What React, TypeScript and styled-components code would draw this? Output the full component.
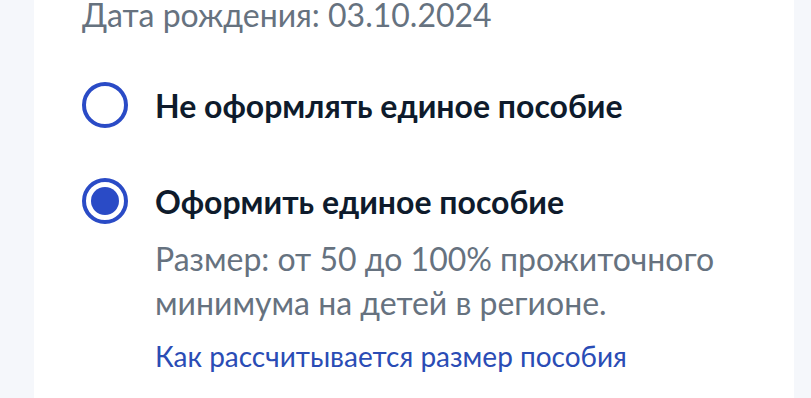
import React from "react";
import styled, { createGlobalStyle } from "styled-components";

const Global = createGlobalStyle`
  html, body { margin: 0; padding: 0; background: #f5f7fb; }
  body { font-family: Lato, "Noto Sans", sans-serif; -webkit-font-smoothing: antialiased; }
`;

const Page = styled.div`
  display: flex;
  min-height: 398px;
  padding: 0 17px 0 34px;
  box-sizing: border-box;
  overflow: hidden;
`;

const Card = styled.div`
  flex: 1;
  background: #ffffff;
  padding: 0 0 0 48px;
  box-sizing: border-box;
`;

const BirthDate = styled.div`
  font-size: 32px;
  line-height: 30px;
  color: #66727f;
`;

const Options = styled.div`
  display: flex;
  flex-direction: column;
  gap: 50px;
  margin-top: 52px;
`;

const Option = styled.label`
  display: grid;
  grid-template-columns: 46px 1fr;
  column-gap: 27px;
  align-items: start;
`;

const Radio = styled.span<{ $checked?: boolean }>`
  width: 46px;
  height: 46px;
  box-sizing: border-box;
  border: 4px solid #2a4bc6;
  border-radius: 50%;
  display: flex;
  align-items: center;
  justify-content: center;
  &::after {
    content: "";
    display: ${(p) => (p.$checked ? "block" : "none")};
    width: 28px;
    height: 28px;
    border-radius: 50%;
    background: #2a4bc6;
  }
`;

const Body = styled.div`
  display: flex;
  flex-direction: column;
  align-items: flex-start;
  padding-top: 4px;
`;

const Title = styled.div`
  font-size: 32px;
  line-height: 40px;
  font-weight: 700;
  color: #0e1b2c;
`;

const Description = styled.div`
  margin-top: 15px;
  font-size: 32px;
  line-height: 44px;
  color: #66727f;
`;

const HelpLink = styled.a`
  margin-top: 13px;
  font-size: 28px;
  line-height: 36px;
  color: #2a4cb5;
  text-decoration: none;
`;

export default function App() {
  return (
    <>
      <Global />
      <Page>
        <Card>
          <BirthDate>Дата рождения: 03.10.2024</BirthDate>
          <Options>
            <Option>
              <Radio />
              <Body>
                <Title>Не оформлять единое пособие</Title>
              </Body>
            </Option>
            <Option>
              <Radio $checked />
              <Body>
                <Title>Оформить единое пособие</Title>
                <Description>
                  Размер: от 50 до 100% прожиточного
                  <br />
                  минимума на детей в регионе.
                </Description>
                <HelpLink href="#">Как рассчитывается размер пособия</HelpLink>
              </Body>
            </Option>
          </Options>
        </Card>
      </Page>
    </>
  );
}
